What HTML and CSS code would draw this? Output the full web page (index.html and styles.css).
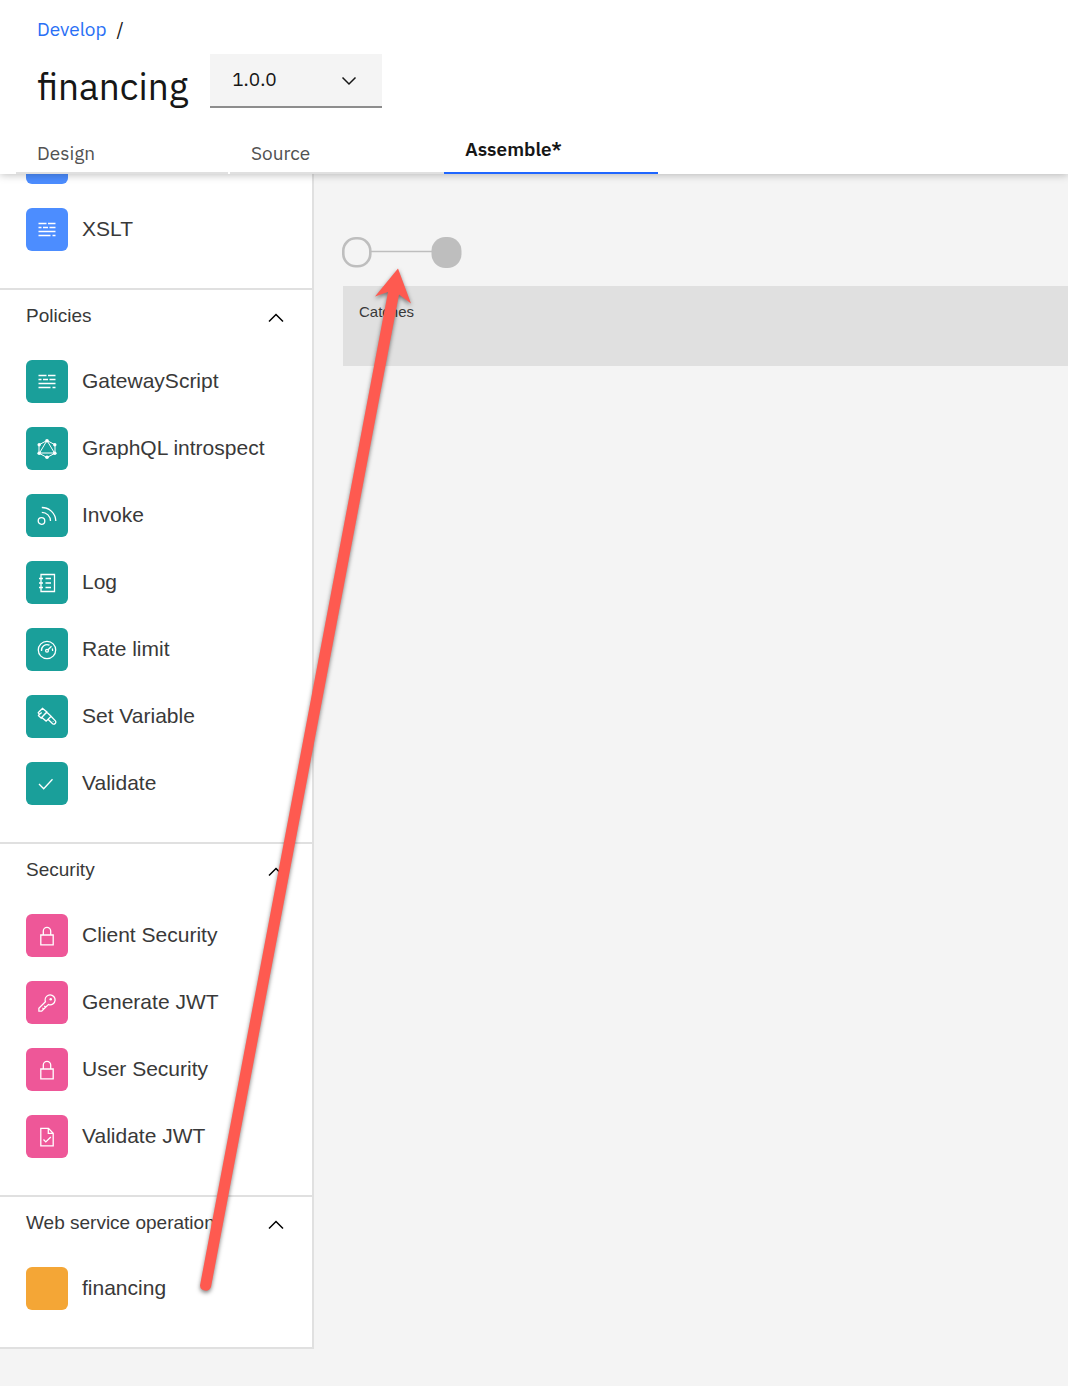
FILE: index.html
```html
<!DOCTYPE html>
<html lang="en">
<head>
<meta charset="utf-8">
<meta name="viewport" content="width=device-width, initial-scale=1">
<title>financing</title>
<link rel="stylesheet" href="styles.css">
</head>
<body>
<svg class="sprite" aria-hidden="true">
  <symbol id="i-script" viewBox="0 0 20 20"><path d="M1.500 3.500h8M11 3.500h7.500M1.500 7.500h3M6 7.500h5M12.500 7.500h6M1.500 11.500h17M1.500 15.500h12M15.500 15.500h3" stroke-width="1.500"/></symbol>
  <symbol id="i-graph" viewBox="0 0 20 20"><path d="M10 1.500l8 4.300v8.400l-8 4.300-8-4.300V5.800zM10 1.500L2.500 14h15z" stroke-width="1"/><g fill="currentColor" stroke="none"><circle cx="10" cy="1.800" r="1.800"/><circle cx="17.800" cy="5.700" r="1.700"/><circle cx="17.800" cy="14.200" r="1.800"/><circle cx="10" cy="18.200" r="1.800"/><circle cx="2.200" cy="14.200" r="1.800"/><circle cx="2.200" cy="5.700" r="1.700"/></g></symbol>
  <symbol id="i-invoke" viewBox="0 0 20 20"><circle cx="4.500" cy="15" r="3.300"/><path d="M4.800 6.300a8.700 8.700 0 0 1 8.700 8.700M4.800 1.500A13.800 13.800 0 0 1 18.800 15"/></symbol>
  <symbol id="i-log" viewBox="0 0 20 20"><path d="M4 1.500h13.500v17H4zM2 5.500h4M2 10h4M2 14.500h4M8.500 5.500H14M8.500 10H14M8.500 14.500H14"/></symbol>
  <symbol id="i-gauge" viewBox="0 0 20 20"><circle cx="10" cy="10" r="8.700"/><circle cx="10" cy="10.800" r="1.400"/><path d="M11 9.800l3.500-3.500M4.500 11A5.600 5.600 0 0 1 12.500 5.200M15.200 8.500a5.600 5.600 0 0 1 .4 2.500"/></symbol>
  <symbol id="i-brush" viewBox="0 0 20 20"><path d="M.900 6L5.500 1.300l4.300 3.600-3.300 3.600M.900 6l1.500 1.400 2.300-2M2.400 7.400l-.9 1.300 2.600 2.300 2.400-2.500M9.800 5.300l4.300 3.900-5 4.900-4.300-3.700zM14 9.300l4.400 4.600c1.200 1.700-.8 4.200-2.800 2.800l-4.600-4.500M16.200 14.600v.4"/></symbol>
  <symbol id="i-check" viewBox="0 0 20 20"><path d="M2 10l4.700 4.800L15.500 5.200"/></symbol>
  <symbol id="i-lock" viewBox="0 0 20 20"><path d="M3.800 9h12.400v9.800H3.800zM6.300 9V5a3.600 3.600 0 0 1 7.400 0v4"/></symbol>
  <symbol id="i-key" viewBox="0 0 32 32"><path fill="currentColor" stroke="none" d="M21 2a9 9 0 0 0-9 9 8.700 8.700 0 0 0 .39 2.610L2 24v6h6l10.390-10.390A9 9 0 0 0 30 11.740 9.130 9.130 0 0 0 21 2zm0 16a7 7 0 0 1-2-.3l-1.150-.35-.85.85-3.180 3.180L12.410 20 11 21.410l1.380 1.380-1.590 1.590L9.410 23 8 24.410l1.380 1.380L7.170 28H4v-3.170L13.800 15l.85-.85-.29-.95a7.140 7.140 0 0 1 3.400-8.440A7 7 0 1 1 21 18z"/><circle cx="22" cy="10" r="2" fill="currentColor" stroke="none"/></symbol>
  <symbol id="i-doc" viewBox="0 0 20 20"><path d="M3.800 1.300h7.700l4.700 4.900v12.600H3.800zM11.300 1.300v5h4.900M6.500 12.500l2.300 2.400 5-4.900"/></symbol>
  <symbol id="i-up" viewBox="0 0 16 10"><path d="M1 8.500l7-7 7 7"/></symbol>
</svg>

<div class="page">
  <header class="top">
    <nav class="crumbs" aria-label="Breadcrumb"><a href="#">Develop</a><span>/</span></nav>
    <div class="title-row">
      <h1>financing</h1>
      <div class="version">
        <select aria-label="Version"><option>1.0.0</option></select>
        <svg viewBox="0 0 16 10" aria-hidden="true"><path d="M1.500 1.500L8 8l6.500-6.500"/></svg>
      </div>
    </div>
    <nav class="tabs" aria-label="Views">
      <a href="#" class="tab">Design</a>
      <a href="#" class="tab">Source</a>
      <a href="#" class="tab tab-active" aria-current="page">Assemble*</a>
    </nav>
  </header>

  <div class="workspace">
    <aside class="palette">
      <section class="group group-scrolled">
        <ul>
          <li><span class="tile blue"></span></li>
          <li><span class="tile blue"><svg><use href="#i-script"/></svg></span>XSLT</li>
        </ul>
      </section>
      <section class="group">
        <button type="button" class="group-head"><span>Policies</span><svg><use href="#i-up"/></svg></button>
        <ul>
          <li><span class="tile teal"><svg><use href="#i-script"/></svg></span>GatewayScript</li>
          <li><span class="tile teal"><svg><use href="#i-graph"/></svg></span>GraphQL introspect</li>
          <li><span class="tile teal"><svg><use href="#i-invoke"/></svg></span>Invoke</li>
          <li><span class="tile teal"><svg><use href="#i-log"/></svg></span>Log</li>
          <li><span class="tile teal"><svg><use href="#i-gauge"/></svg></span>Rate limit</li>
          <li><span class="tile teal"><svg><use href="#i-brush"/></svg></span>Set Variable</li>
          <li><span class="tile teal"><svg><use href="#i-check"/></svg></span>Validate</li>
        </ul>
      </section>
      <section class="group">
        <button type="button" class="group-head"><span>Security</span><svg><use href="#i-up"/></svg></button>
        <ul>
          <li><span class="tile pink"><svg><use href="#i-lock"/></svg></span>Client Security</li>
          <li><span class="tile pink"><svg><use href="#i-key"/></svg></span>Generate JWT</li>
          <li><span class="tile pink"><svg><use href="#i-lock"/></svg></span>User Security</li>
          <li><span class="tile pink"><svg><use href="#i-doc"/></svg></span>Validate JWT</li>
        </ul>
      </section>
      <section class="group">
        <button type="button" class="group-head"><span>Web service operation</span><svg><use href="#i-up"/></svg></button>
        <ul>
          <li><span class="tile orange"></span>financing</li>
        </ul>
      </section>
    </aside>

    <main class="canvas">
      <svg class="flow" width="120" height="32" viewBox="0 0 120 32" role="img" aria-label="Assembly flow">
        <path d="M28 14.500h62" stroke="#bebebe" stroke-width="1.500"/>
        <rect x=".300" y="1.300" width="27" height="28" rx="12.500" fill="#f4f4f4" stroke="#bebebe" stroke-width="2.600"/>
        <rect x="88.500" y="0" width="30" height="31" rx="14" fill="#bebebe" stroke="none"/>
      </svg>
      <div class="catches">Catches</div>
    </main>
  </div>

  <svg class="pointer" width="440" height="1310" viewBox="0 0 440 1310" aria-hidden="true">
    <path d="M398 268.500L411 303.500 399 294.500 211 1287A5.700 5.700 0 0 1 200 1285.500L388 292 375 296.500z"/>
  </svg>
</div>
</body>
</html>
```
FILE: styles.css
```css
* { box-sizing: border-box; }

body {
  margin: 0;
  background: #f4f4f4;
  color: #393939;
  font-family: "Helvetica Neue", "Liberation Sans", Arial, sans-serif;
}

.sprite { display: none; }
.page { position: relative; min-height: 100vh; }

svg { fill: none; stroke: currentColor; }

/* Header */
.top {
  position: relative;
  z-index: 1;
  background: #fff;
  box-shadow: 0 1px 8px rgba(0, 0, 0, .25);
  font-family: "IBM Plex Sans", "Noto Sans", sans-serif;
  font-size: 19px;
}

.crumbs {
  display: flex;
  gap: 10px;
  padding: 17px 37px 0;
  line-height: 24px;
  color: #161616;
}
.crumbs a { color: #2a6ff5; text-decoration: none; }

.title-row {
  display: flex;
  align-items: flex-start;
  gap: 22px;
  padding: 13px 37px 0;
}
h1 {
  margin: 0;
  padding-top: 8px;
  font-size: 37px;
  font-weight: 400;
  line-height: 48px;
  color: #161616;
}

.version { position: relative; width: 172px; }
.version select {
  display: block;
  width: 100%;
  height: 54px;
  padding: 0 48px 2px 22px;
  border: 0;
  border-bottom: 2px solid #8d8d8d;
  border-radius: 0;
  background: #f4f4f4;
  color: #161616;
  font: inherit;
  appearance: none;
}
.version svg {
  position: absolute;
  top: 22px;
  right: 25px;
  width: 16px;
  height: 10px;
  color: #161616;
  stroke-width: 1.5;
  pointer-events: none;
}

.tabs {
  display: flex;
  align-items: stretch;
  padding: 14px 16px 0;
}
.tab {
  width: 214px;
  padding: 17px 21px 7px;
  border-bottom: 2px solid #e0e0e0;
  color: #525252;
  line-height: 24px;
  text-decoration: none;
}
.tab:first-child { width: 212px; margin-right: 2px; }
.tab-active {
  padding-top: 13px;
  border-color: #1f66ff;
  color: #161616;
  font-weight: 600;
}

/* Palette */
.workspace { display: flex; align-items: flex-start; }

.palette {
  flex: 0 0 314px;
  overflow: hidden;
  background: #fff;
  border-right: 2px solid #e0e0e0;
}

.group { border-bottom: 2px solid #e0e0e0; }
.group-scrolled { margin-top: -33px; }

.group-head {
  display: flex;
  justify-content: space-between;
  align-items: flex-start;
  width: 100%;
  height: 70px;
  padding: 14px 28px 0 26px;
  border: 0;
  background: none;
  color: #393939;
  font: inherit;
  font-size: 19px;
  line-height: 24px;
  text-align: left;
}
.group-head svg {
  width: 16px;
  height: 10px;
  margin-top: 9px;
  color: #000;
  stroke-width: 1.5;
}

.group ul {
  display: flex;
  flex-direction: column;
  gap: 24px;
  margin: 0;
  padding: 0 0 37px 26px;
  list-style: none;
}
.group li {
  display: flex;
  align-items: flex-start;
  gap: 14px;
  font-size: 21px;
  line-height: 42px;
}

.tile {
  display: flex;
  align-items: center;
  justify-content: center;
  width: 42px;
  height: 43px;
  border-radius: 6px;
  color: #fff;
}
.tile svg { width: 20px; height: 20px; stroke-width: 1.3; }
.blue { background: #4c8dff; }
.teal { background: #1a9f9a; }
.pink { background: #ee5798; }
.orange { background: #f4a636; }

/* Canvas */
.canvas {
  flex: 1;
  min-width: 0;
  padding: 63px 0 0 29px;
}
.flow { display: block; overflow: visible; }
.catches {
  min-height: 80px;
  margin-top: 17px;
  padding: 14px 16px;
  background: #e0e0e0;
  font-size: 15px;
  line-height: 24px;
}

/* Arrow laid over the palette and the canvas */
.pointer {
  position: absolute;
  z-index: 2;
  top: 0;
  left: 0;
  fill: #fe5a50;
  stroke: none;
  filter: drop-shadow(0 2px 2px rgba(0, 0, 0, .5));
  pointer-events: none;
}
```
